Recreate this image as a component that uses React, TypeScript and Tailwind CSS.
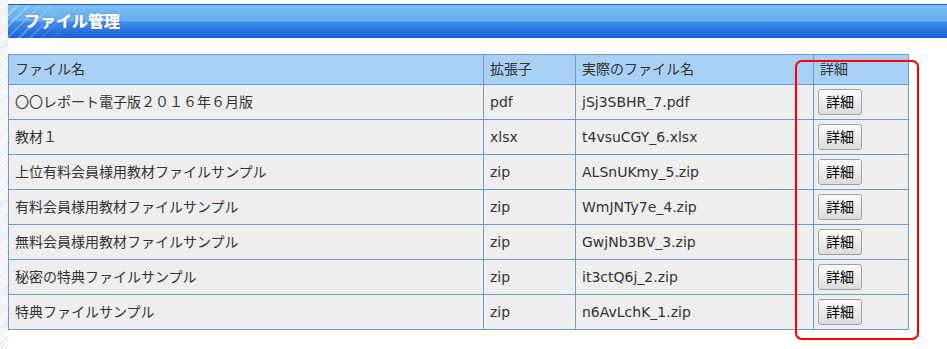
import React from 'react';

const files = [
  { name: '〇〇レポート電子版２０１６年６月版', ext: 'pdf', real: 'jSj3SBHR_7.pdf' },
  { name: '教材１', ext: 'xlsx', real: 't4vsuCGY_6.xlsx' },
  { name: '上位有料会員様用教材ファイルサンプル', ext: 'zip', real: 'ALSnUKmy_5.zip' },
  { name: '有料会員様用教材ファイルサンプル', ext: 'zip', real: 'WmJNTy7e_4.zip' },
  { name: '無料会員様用教材ファイルサンプル', ext: 'zip', real: 'GwjNb3BV_3.zip' },
  { name: '秘密の特典ファイルサンプル', ext: 'zip', real: 'it3ctQ6j_2.zip' },
  { name: '特典ファイルサンプル', ext: 'zip', real: 'n6AvLchK_1.zip' },
];

const App = () => {
  return (
    <div
      className="w-[947px] h-[349px] overflow-hidden bg-[repeating-linear-gradient(135deg,#dfe8fb_0px,#dfe8fb_1px,#ffffff_1px,#ffffff_3px)] font-['DejaVu_Sans','Noto_Sans_CJK_JP',sans-serif] text-[14px] text-[#333]"
    >
      <div className="relative ml-[8px] h-full bg-white pt-[4px]">
        {/* Title bar */}
        <div className="relative h-[34px] border-t border-[#1d5fd4] bg-[linear-gradient(to_bottom,#7cbff3_0%,#64adef_48%,#3f8de8_52%,#1b60d6_100%)] overflow-hidden">
          <div className="absolute left-0 top-0 h-full w-[60px] bg-[repeating-linear-gradient(135deg,rgba(255,255,255,0)_0px,rgba(255,255,255,0)_6px,rgba(255,255,255,0.35)_6px,rgba(255,255,255,0.35)_8px)] [mask-image:linear-gradient(to_right,black,transparent)]" />
          <h1 className="relative pl-[16px] leading-[30px] text-[16px] font-bold text-white font-['Noto_Sans_CJK_JP',sans-serif] [text-shadow:0_0_1px_rgba(255,255,255,0.9),0_0_2px_rgba(0,40,120,0.5)]">
            ファイル管理
          </h1>
        </div>

        {/* File table */}
        <table className="mt-[16px] w-[900px] border-collapse border border-[#6b9bd2] table-fixed">
          <colgroup>
            <col className="w-[475px]" />
            <col className="w-[92px]" />
            <col className="w-[238px]" />
            <col className="w-[95px]" />
          </colgroup>
          <thead>
            <tr className="h-[30px] bg-[#a9d0f5]">
              <th className="border border-[#6b9bd2] px-[6px] text-left font-normal">ファイル名</th>
              <th className="border border-[#6b9bd2] px-[6px] text-left font-normal">拡張子</th>
              <th className="border border-[#6b9bd2] px-[6px] text-left font-normal">実際のファイル名</th>
              <th className="border border-[#6b9bd2] px-[6px] text-left font-normal">詳細</th>
            </tr>
          </thead>
          <tbody>
            {files.map((f) => (
              <tr key={f.real} className="h-[35px] bg-[#eeeeee]">
                <td className="border border-[#6b9bd2] px-[6px]">{f.name}</td>
                <td className="border border-[#6b9bd2] px-[6px]">{f.ext}</td>
                <td className="border border-[#6b9bd2] px-[6px]">{f.real}</td>
                <td className="border border-[#6b9bd2] px-[4px]">
                  <button className="h-[26px] px-[7px] rounded-[3px] border border-[#a0a0a0] bg-[linear-gradient(to_bottom,#fbfbfb,#dcdcdc)] text-[14px] text-black leading-none">
                    詳細
                  </button>
                </td>
              </tr>
            ))}
          </tbody>
        </table>

        {/* Red highlight */}
        <div className="absolute left-[787px] top-[60px] w-[124px] h-[280px] rounded-[7px] border-2 border-[#ff0000] shadow-[0_0_1px_#ff6060]" />
      </div>
    </div>
  );
};

export default App;
